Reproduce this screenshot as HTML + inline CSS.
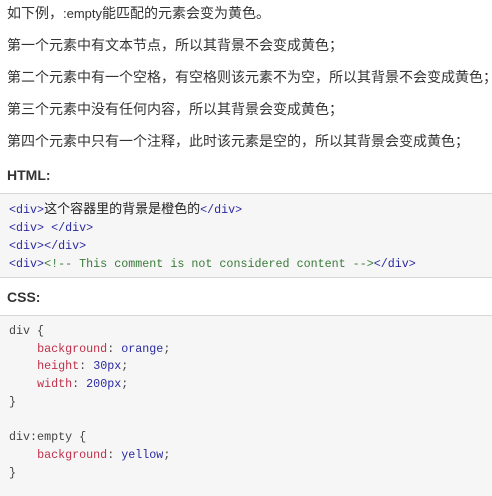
<!DOCTYPE html>
<html><head><meta charset="utf-8"><style>
body{margin:0;width:492px;height:486px;overflow:hidden;background:#fff;font-family:"Liberation Sans","Noto Sans CJK SC",sans-serif;color:#333;font-size:14px}
.p{position:absolute;left:7px;white-space:nowrap;line-height:16px}
.p .e{font-size:13px}
h{position:absolute;left:7px;font-weight:bold;font-size:14px;color:#333}
.box{position:absolute;left:0;width:492px;background:#f6f6f6;border-top:1px solid #d8d8d8;border-bottom:1px solid #d8d8d8}
pre{margin:0;position:absolute;left:9px;font-family:"Liberation Mono","Noto Sans CJK SC",monospace;font-size:11.7px;color:#444}
.t{color:#2a2aa0}.r{color:#c0304a}.v{color:#2a2aa0}.c{color:#3a7a3a}.x{font-family:"Liberation Sans","Noto Sans CJK SC",sans-serif;font-size:13px;color:#222}
</style></head><body>
<div class="p" style="top:5px">如下例，<span class="e">:empty</span>能匹配的元素会变为黄色。</div>
<div class="p" style="top:37px">第一个元素中有文本节点，所以其背景不会变成黄色；</div>
<div class="p" style="top:69px">第二个元素中有一个空格，有空格则该元素不为空，所以其背景不会变成黄色；</div>
<div class="p" style="top:101px">第三个元素中没有任何内容，所以其背景会变成黄色；</div>
<div class="p" style="top:133px">第四个元素中只有一个注释，此时该元素是空的，所以其背景会变成黄色；</div>
<h style="top:167px">HTML:</h>
<div class="box" style="top:193px;height:83px"></div>
<pre style="top:200px;line-height:18px"><span class="t">&lt;div&gt;</span><span class="x">这个容器里的背景是橙色的</span><span class="t">&lt;/div&gt;</span>
<span class="t">&lt;div&gt; &lt;/div&gt;</span>
<span class="t">&lt;div&gt;&lt;/div&gt;</span>
<span class="t">&lt;div&gt;</span><span class="c">&lt;!-- This comment is not considered content --&gt;</span><span class="t">&lt;/div&gt;</span></pre>
<h style="top:289px">CSS:</h>
<div class="box" style="top:315px;height:180px;border-bottom:none"></div>
<pre style="top:323px;line-height:17.7px">div {
    <span class="r">background</span>: <span class="v">orange</span>;
    <span class="r">height</span>: <span class="v">30px</span>;
    <span class="r">width</span>: <span class="v">200px</span>;
}

div:empty {
    <span class="r">background</span>: <span class="v">yellow</span>;
}</pre>
</body></html>
